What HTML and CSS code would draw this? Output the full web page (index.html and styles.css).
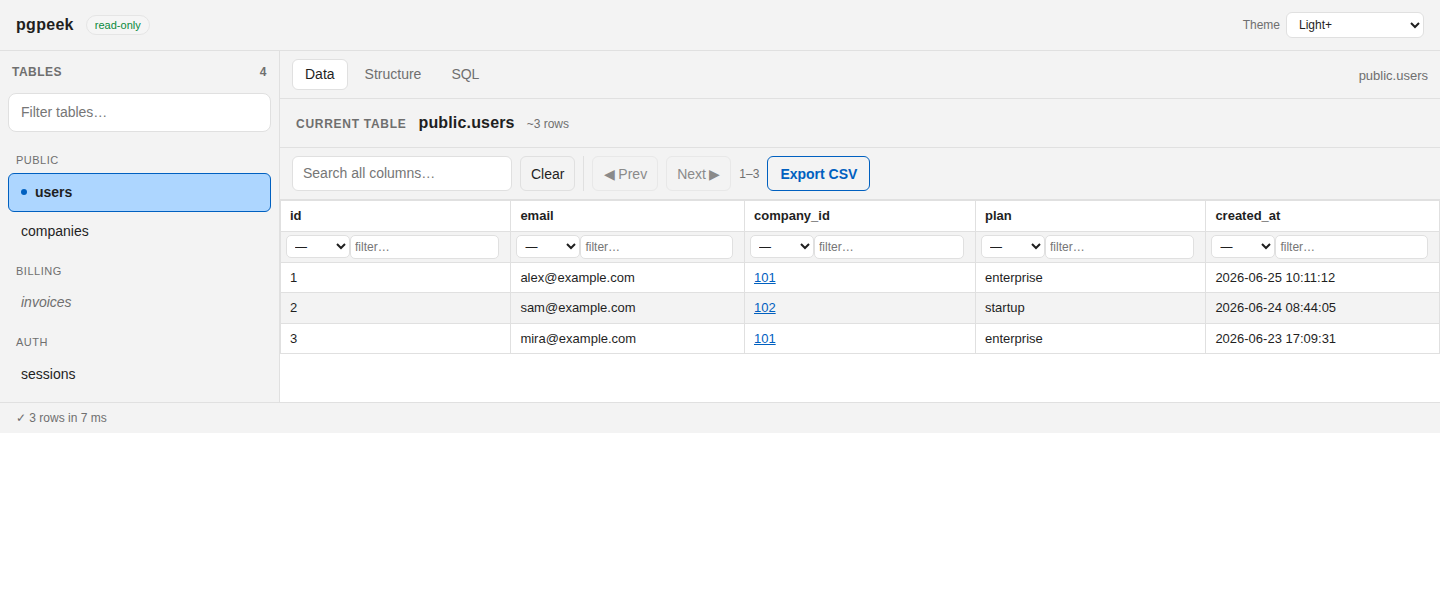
FILE: index.html
```html
<!DOCTYPE html>
<html lang="en">
<head>
  <meta charset="UTF-8">
  <meta name="viewport" content="width=device-width, initial-scale=1.0">
  <title>pgpeek</title>
  <link rel="stylesheet" href="styles.css">
</head>
<body>
  <div class="app">
    <header class="topbar">
      <div class="brand">
        <span class="logo">pgpeek</span>
        <span class="badge">read-only</span>
      </div>
      <label class="theme">
        Theme
        <select class="theme-select">
          <option>Light+</option>
        </select>
      </label>
    </header>

    <div class="main">
      <aside class="sidebar">
        <div class="sidebar-head">
          <span>TABLES</span>
          <span>4</span>
        </div>
        <input class="table-filter" type="text" placeholder="Filter tables…">
        <div class="group-label group-first">PUBLIC</div>
        <a href="#" class="table-link active"><span class="dot"></span>users</a>
        <a href="#" class="table-link">companies</a>
        <div class="group-label">BILLING</div>
        <a href="#" class="table-link view">invoices</a>
        <div class="group-label">AUTH</div>
        <a href="#" class="table-link">sessions</a>
      </aside>

      <section class="content">
        <div class="tabs">
          <button class="tab selected">Data</button>
          <button class="tab">Structure</button>
          <button class="tab">SQL</button>
          <span class="tabs-path">public.users</span>
        </div>

        <div class="current">
          <span class="current-label">CURRENT TABLE</span>
          <span class="current-name">public.users</span>
          <span class="current-rows">~3 rows</span>
        </div>

        <div class="toolbar">
          <input class="search" type="text" placeholder="Search all columns…">
          <button class="btn">Clear</button>
          <span class="divider"></span>
          <button class="btn pager" disabled>◀ Prev</button>
          <button class="btn pager" disabled>Next ▶</button>
          <span class="range">1–3</span>
          <button class="btn export">Export CSV</button>
        </div>

        <table class="grid">
          <colgroup>
            <col class="col-id">
            <col class="col-email">
            <col class="col-company">
            <col class="col-plan">
            <col class="col-created">
          </colgroup>
          <thead>
            <tr>
              <th>id</th>
              <th>email</th>
              <th>company_id</th>
              <th>plan</th>
              <th>created_at</th>
            </tr>
            <tr class="filters">
              <td><div class="filter"><select><option>—</option></select><input type="text" placeholder="filter…"></div></td>
              <td><div class="filter"><select><option>—</option></select><input type="text" placeholder="filter…"></div></td>
              <td><div class="filter"><select><option>—</option></select><input type="text" placeholder="filter…"></div></td>
              <td><div class="filter"><select><option>—</option></select><input type="text" placeholder="filter…"></div></td>
              <td><div class="filter"><select><option>—</option></select><input type="text" placeholder="filter…"></div></td>
            </tr>
          </thead>
          <tbody>
            <tr>
              <td>1</td>
              <td>alex@example.com</td>
              <td><a href="#">101</a></td>
              <td>enterprise</td>
              <td>2026-06-25 10:11:12</td>
            </tr>
            <tr>
              <td>2</td>
              <td>sam@example.com</td>
              <td><a href="#">102</a></td>
              <td>startup</td>
              <td>2026-06-24 08:44:05</td>
            </tr>
            <tr>
              <td>3</td>
              <td>mira@example.com</td>
              <td><a href="#">101</a></td>
              <td>enterprise</td>
              <td>2026-06-23 17:09:31</td>
            </tr>
          </tbody>
        </table>
      </section>
    </div>

    <footer class="status">✓ 3 rows in 7 ms</footer>
  </div>
</body>
</html>
```

FILE: styles.css
```css
* {
  margin: 0;
  padding: 0;
  box-sizing: border-box;
}

body {
  background-color: #fff;
  color: #1f1f1f;
  font-family: "Liberation Sans", Arial, sans-serif;
  font-size: 13px;
}

button,
input,
select {
  font-family: inherit;
}

.app {
  height: 433px;
  display: flex;
  flex-direction: column;
}

/* Top bar */
.topbar {
  height: 51px;
  flex: none;
  display: flex;
  justify-content: space-between;
  align-items: center;
  padding: 0 16px;
  background-color: #f3f3f3;
  border-bottom: 1px solid #e0e0e0;
}

.brand {
  display: flex;
  align-items: center;
  gap: 12px;
}

.logo {
  font-size: 16px;
  font-weight: bold;
  letter-spacing: 0.3px;
}

.badge {
  font-size: 11px;
  color: #0a8a3c;
  padding: 3px 8px;
  background-color: #f5f5f5;
  border: 1px solid #e5e5e5;
  border-radius: 999px;
}

.theme {
  display: flex;
  align-items: center;
  gap: 6px;
  font-size: 12px;
  color: #6f6f6f;
}

.theme-select {
  width: 138px;
  height: 26px;
  padding: 0 8px;
  font-size: 12px;
  color: #1f1f1f;
  background-color: #fff;
  border: 1px solid #e0e0e0;
  border-radius: 6px;
}

.main {
  flex: 1;
  min-height: 0;
  display: flex;
}

/* Sidebar */
.sidebar {
  width: 280px;
  flex: none;
  padding: 0 8px;
  background-color: #f3f3f3;
  border-right: 1px solid #e0e0e0;
}

.sidebar-head {
  display: flex;
  justify-content: space-between;
  align-items: center;
  height: 42px;
  padding: 0 4px;
  font-size: 12px;
  font-weight: bold;
  letter-spacing: 0.5px;
  color: #6f6f6f;
}

.table-filter {
  display: block;
  width: 100%;
  height: 39px;
  padding: 0 12px 2px;
  font-size: 14px;
  background-color: #fff;
  border: 1px solid #e0e0e0;
  border-radius: 8px;
}

.table-filter::placeholder,
.search::placeholder,
.filter input::placeholder {
  color: #767676;
}

.group-label {
  padding: 15px 8px 6px;
  font-size: 11px;
  letter-spacing: 0.5px;
  line-height: 13px;
  color: #6f6f6f;
}

.group-label.group-first {
  padding-top: 22px;
}

.table-link {
  display: flex;
  align-items: center;
  height: 37.5px;
  padding: 0 13px;
  font-size: 14px;
  color: #1f1f1f;
  text-decoration: none;
  border-radius: 6px;
}

.table-link.active {
  height: 39px;
  padding: 0 12px 2px;
  font-weight: bold;
  background-color: #add6ff;
  border: 1px solid #0060c0;
}

.table-link.view {
  font-style: italic;
  color: #6f6f6f;
}

.dot {
  width: 6px;
  height: 6px;
  margin-right: 8px;
  border-radius: 50%;
  background-color: #0060c0;
}

/* Content */
.content {
  flex: 1;
  min-width: 0;
  display: flex;
  flex-direction: column;
}

.tabs {
  height: 48px;
  flex: none;
  display: flex;
  align-items: center;
  gap: 4px;
  padding: 0 12px;
  background-color: #f3f3f3;
  border-bottom: 1px solid #e0e0e0;
}

.tab {
  height: 31px;
  padding: 0 12px 2px;
  font-size: 14px;
  color: #6f6f6f;
  background: none;
  border: 1px solid transparent;
  border-radius: 6px;
}

.tab.selected {
  color: #1f1f1f;
  background-color: #fff;
  border-color: #e0e0e0;
}

.tabs-path {
  margin-left: auto;
  padding-top: 2px;
  font-size: 13px;
  color: #6f6f6f;
}

.current {
  height: 49px;
  flex: none;
  display: flex;
  align-items: baseline;
  padding: 15px 16px 0;
  background-color: #f3f3f3;
  border-bottom: 1px solid #e0e0e0;
}

.current-label {
  font-size: 12px;
  font-weight: bold;
  letter-spacing: 0.72px;
  color: #6f6f6f;
}

.current-name {
  margin-left: 12px;
  font-size: 16px;
  font-weight: bold;
  letter-spacing: 0.16px;
}

.current-rows {
  margin-left: 12px;
  font-size: 12px;
  color: #6f6f6f;
}

.toolbar {
  height: 52px;
  flex: none;
  display: flex;
  align-items: center;
  gap: 8px;
  padding: 0 12px;
  background-color: #f3f3f3;
  border-bottom: 1px solid #e0e0e0;
}

.search {
  width: 220px;
  height: 35px;
  padding: 0 10px 2px;
  font-size: 14px;
  background-color: #fff;
  border: 1px solid #e0e0e0;
  border-radius: 6px;
}

.btn {
  height: 35px;
  padding: 0 10px;
  font-size: 14px;
  color: #1f1f1f;
  background-color: #f3f3f3;
  border: 1px solid #e0e0e0;
  border-radius: 6px;
}

.btn:disabled {
  color: #8a8a8a;
  border-color: #e8e8e8;
}

.btn.pager {
  padding: 0 9.5px 0 10.5px;
  word-spacing: -0.5px;
}

.range {
  margin-left: 0.5px;
  font-size: 12px;
  color: #6f6f6f;
}

.btn.export {
  padding: 0 12px;
  font-weight: bold;
  color: #0060c0;
  border-color: #0060c0;
}

.divider {
  width: 1px;
  height: 35px;
  background-color: #e0e0e0;
}

/* Data table */
.grid {
  width: 100%;
  table-layout: fixed;
  border-collapse: collapse;
  font-size: 13px;
}

.col-id { width: 230.4px; }
.col-email { width: 233.6px; }
.col-company { width: 231px; }
.col-plan { width: 230.4px; }

.grid th,
.grid td {
  padding: 7px 9px;
  text-align: left;
  line-height: 15.4px;
  border: 1px solid #e0e0e0;
}

.grid th {
  line-height: 16px;
  background-color: #fff;
}

.grid .filters td {
  padding: 3px 11px 3px 5px;
  line-height: 16px;
  background-color: #f3f3f3;
}

.grid tbody tr:nth-child(even) td {
  background-color: #f3f3f3;
}

.grid a {
  color: #0060c0;
}

.filter {
  display: flex;
}

.filter select {
  width: 64px;
  height: 23px;
  flex: none;
  padding: 0 4px;
  font-size: 12px;
  color: #1f1f1f;
  background-color: #fff;
  border: 1px solid #e0e0e0;
  border-radius: 5px;
}

.filter input {
  flex: 1;
  min-width: 0;
  height: 24px;
  padding: 0 4px;
  font-size: 12px;
  background-color: #fff;
  border: 1px solid #e0e0e0;
  border-radius: 5px;
}

/* Status bar */
.status {
  height: 31px;
  flex: none;
  display: flex;
  align-items: center;
  padding: 0 16px;
  font-size: 12px;
  color: #6f6f6f;
  background-color: #f3f3f3;
  border-top: 1px solid #e0e0e0;
}
```
